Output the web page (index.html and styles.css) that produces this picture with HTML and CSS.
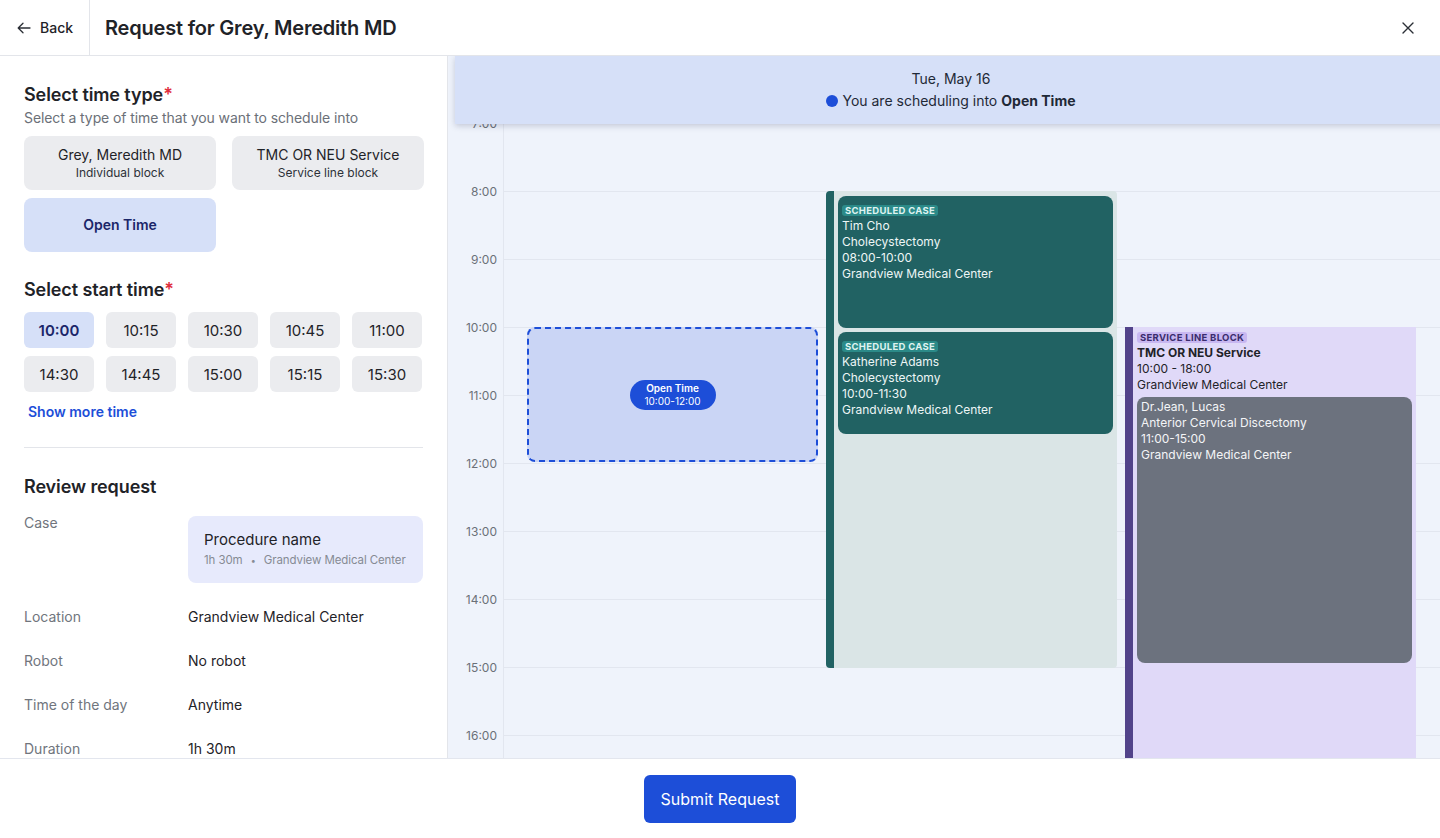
FILE: index.html
```html
<!DOCTYPE html>
<html lang="en">
<head>
<meta charset="utf-8">
<title>Request for Grey, Meredith MD</title>
<link rel="stylesheet" href="styles.css">
</head>
<body>
<div class="app">
  <header class="topbar">
    <button class="back">
      <svg class="back-icon" width="16" height="16" viewBox="0 0 16 16" fill="none" stroke="#2b2f36" stroke-width="1.3" stroke-linecap="round" stroke-linejoin="round"><path d="M14 8H2.5M7 3.2 2.2 8 7 12.8"/></svg>
      <span>Back</span>
    </button>
    <h1 class="title">Request for Grey, Meredith MD</h1>
    <button class="close" aria-label="Close">
      <svg width="12" height="12" viewBox="0 0 12 12" fill="none" stroke="#2b2f36" stroke-width="1.4" stroke-linecap="round"><path d="M1 1l10 10M11 1 1 11"/></svg>
    </button>
  </header>

  <main class="main">
    <aside class="panel">
      <section class="sec">
        <h2 class="sec-title">Select time type<span class="req">*</span></h2>
        <p class="sec-sub">Select a type of time that you want to schedule into</p>
        <div class="type-grid">
          <button class="type-btn"><span class="type-name">Grey, Meredith MD</span><span class="type-sub">Individual block</span></button>
          <button class="type-btn"><span class="type-name">TMC OR NEU Service</span><span class="type-sub">Service line block</span></button>
          <button class="type-btn selected"><span class="type-name">Open Time</span></button>
        </div>
      </section>

      <section class="sec sec-start">
        <h2 class="sec-title">Select start time<span class="req">*</span></h2>
        <div class="time-grid">
          <button class="time-btn selected">10:00</button>
          <button class="time-btn">10:15</button>
          <button class="time-btn">10:30</button>
          <button class="time-btn">10:45</button>
          <button class="time-btn">11:00</button>
          <button class="time-btn">14:30</button>
          <button class="time-btn">14:45</button>
          <button class="time-btn">15:00</button>
          <button class="time-btn">15:15</button>
          <button class="time-btn">15:30</button>
        </div>
        <button class="more-link">Show more time</button>
      </section>

      <hr class="divider">

      <section class="sec sec-review">
        <h2 class="sec-title">Review request</h2>
        <dl class="review">
          <dt>Case</dt>
          <dd>
            <div class="case-summary">
              <div class="case-summary-name">Procedure name</div>
              <div class="case-summary-meta">1h 30m <span class="dot">•</span> Grandview Medical Center</div>
            </div>
          </dd>
          <dt>Location</dt><dd>Grandview Medical Center</dd>
          <dt>Robot</dt><dd>No robot</dd>
          <dt>Time of the day</dt><dd>Anytime</dd>
          <dt>Duration</dt><dd>1h 30m</dd>
        </dl>
      </section>
    </aside>

    <section class="calendar">
      <div class="banner">
        <div class="banner-date">Tue, May 16</div>
        <div class="banner-note"><span class="banner-dot"></span>You are scheduling into <strong>Open Time</strong></div>
      </div>

      <div class="timeline">
        <div class="hour"><span class="hour-label">7:00</span><span class="hour-line"></span></div>
        <div class="hour"><span class="hour-label">8:00</span><span class="hour-line"></span></div>
        <div class="hour"><span class="hour-label">9:00</span><span class="hour-line"></span></div>
        <div class="hour"><span class="hour-label">10:00</span><span class="hour-line"></span></div>
        <div class="hour"><span class="hour-label">11:00</span><span class="hour-line"></span></div>
        <div class="hour"><span class="hour-label">12:00</span><span class="hour-line"></span></div>
        <div class="hour"><span class="hour-label">13:00</span><span class="hour-line"></span></div>
        <div class="hour"><span class="hour-label">14:00</span><span class="hour-line"></span></div>
        <div class="hour"><span class="hour-label">15:00</span><span class="hour-line"></span></div>
        <div class="hour"><span class="hour-label">16:00</span><span class="hour-line"></span></div>

        <div class="events">
          <div class="col">
            <div class="open-slot" style="top:204px;height:135px">
              <div class="open-pill"><span class="open-pill-title">Open Time</span><span>10:00-12:00</span></div>
            </div>
          </div>
          <div class="col">
            <div class="case-block" style="top:68px;height:477px">
              <div class="case-card" style="top:5px;height:132px">
                <span class="badge badge-case">SCHEDULED CASE</span>
                <div>Tim Cho</div>
                <div>Cholecystectomy</div>
                <div>08:00-10:00</div>
                <div>Grandview Medical Center</div>
              </div>
              <div class="case-card" style="top:141px;height:102px">
                <span class="badge badge-case">SCHEDULED CASE</span>
                <div>Katherine Adams</div>
                <div>Cholecystectomy</div>
                <div>10:00-11:30</div>
                <div>Grandview Medical Center</div>
              </div>
            </div>
          </div>
          <div class="col">
            <div class="service-block" style="top:204px;height:544px">
              <span class="badge badge-service">SERVICE LINE BLOCK</span>
              <div class="service-name">TMC OR NEU Service</div>
              <div>10:00 - 18:00</div>
              <div>Grandview Medical Center</div>
              <div class="booked-card" style="top:70px;height:266px">
                <div>Dr.Jean, Lucas</div>
                <div>Anterior Cervical Discectomy</div>
                <div>11:00-15:00</div>
                <div>Grandview Medical Center</div>
              </div>
            </div>
          </div>
        </div>
      </div>
    </section>
  </main>

  <footer class="footer">
    <button class="submit">Submit Request</button>
  </footer>
</div>
</body>
</html>
```

FILE: styles.css
```css
* { box-sizing: border-box; }

body {
  margin: 0;
  font-family: Inter, "Noto Sans", "Liberation Sans", sans-serif;
  color: #1f2328;
  background: #fff;
}

button {
  font-family: inherit;
  cursor: pointer;
}

.app {
  height: 838px;
  display: flex;
  flex-direction: column;
  overflow: hidden;
}

/* Header */
.topbar {
  height: 56px;
  flex: none;
  display: flex;
  align-items: stretch;
  border-bottom: 1px solid #e3e5ea;
}

.back {
  width: 90px;
  display: flex;
  align-items: center;
  gap: 8px;
  padding: 0 0 0 16px;
  border: 0;
  border-right: 1px solid #e3e5ea;
  background: none;
  font-size: 14px;
  font-weight: 500;
  color: #1f2328;
}

.title {
  flex: 1;
  margin: 0;
  padding-left: 15px;
  display: flex;
  align-items: center;
  font-size: 20px;
  font-weight: 600;
  letter-spacing: -0.2px;
  color: #1f2328;
}

.close {
  width: 24px;
  margin-right: 20px;
  border: 0;
  background: none;
  display: flex;
  align-items: center;
  justify-content: center;
  padding: 0;
}

/* Main */
.main {
  flex: 1;
  min-height: 0;
  display: flex;
}

.panel {
  width: 448px;
  flex: none;
  padding: 27px 24px 0;
  border-right: 1px solid #e3e5ea;
  overflow: hidden;
}

.sec-title {
  margin: 0;
  font-size: 18px;
  line-height: 24px;
  font-weight: 600;
  letter-spacing: -0.1px;
  color: #1f2328;
}

.req { color: #e02d3c; }

.sec-sub {
  margin: 1px 0 0;
  font-size: 14px;
  line-height: 20px;
  color: #6b7078;
  letter-spacing: -0.1px;
}

.type-grid {
  margin-top: 8px;
  display: grid;
  grid-template-columns: 192px 192px;
  gap: 8px 16px;
}

.type-btn {
  height: 54px;
  border: 0;
  border-radius: 8px;
  background: #ebecef;
  display: flex;
  flex-direction: column;
  align-items: center;
  justify-content: center;
  padding: 0;
  color: #1f2328;
}

.type-name {
  font-size: 14px;
  line-height: 20px;
}

.type-sub {
  font-size: 12px;
  line-height: 16px;
  color: #2d3138;
}

.type-btn.selected {
  background: #d6e0f8;
}

.type-btn.selected .type-name {
  font-weight: 600;
  color: #1b2669;
}

.sec-start { margin-top: 26px; }

.time-grid {
  margin-top: 10px;
  display: grid;
  grid-template-columns: repeat(5, 70px);
  gap: 8px 12px;
}

.time-btn {
  height: 36px;
  border: 0;
  border-radius: 6px;
  background: #ebecef;
  font-size: 15px;
  color: #1f2328;
  padding: 0;
}

.time-btn.selected {
  background: #d6e0f8;
  color: #1b2669;
  font-weight: 600;
}

.more-link {
  margin-top: 10px;
  padding: 0 4px;
  border: 0;
  background: none;
  font-size: 14px;
  line-height: 20px;
  font-weight: 600;
  color: #1d4ed8;
}

.divider {
  margin: 25px 0 0;
  border: 0;
  border-top: 1px solid #e3e5ea;
}

.sec-review { margin-top: 27px; }

.review {
  margin: 14px 0 0;
  display: grid;
  grid-template-columns: 164px 1fr;
  row-gap: 24px;
  font-size: 14px;
  line-height: 20px;
}

.review dt {
  color: #70757d;
}

.review dd {
  margin: 0;
  color: #1f2328;
}

.case-summary {
  margin-top: 3px;
  padding: 14px 16px;
  border-radius: 8px;
  background: #e7eafc;
}

.case-summary-name {
  font-size: 15px;
  line-height: 20px;
  color: #1f2328;
}

.case-summary-meta {
  margin-top: 2px;
  font-size: 11.5px;
  line-height: 16px;
  color: #868b94;
  white-space: nowrap;
  letter-spacing: -0.1px;
}

.case-summary-meta .dot {
  margin: 0 5px;
  font-size: 9px;
}

/* Calendar */
.calendar {
  flex: 1;
  position: relative;
  overflow: hidden;
  background: #eff3fb;
}

.banner {
  position: absolute;
  top: 0;
  left: 7px;
  width: 100%;
  height: 68px;
  z-index: 5;
  background: #d6e0f8;
  box-shadow: 0 2px 6px rgba(40, 50, 90, 0.22);
  display: flex;
  flex-direction: column;
  align-items: center;
  justify-content: center;
  gap: 2px;
  font-size: 14px;
  line-height: 20px;
  color: #1f2937;
}

.banner-note {
  display: flex;
  align-items: center;
}

.banner-dot {
  width: 12px;
  height: 12px;
  border-radius: 50%;
  background: #1d4ed8;
  margin-right: 4px;
}

.banner-note strong {
  font-weight: 700;
  margin-left: 4px;
}

.timeline {
  position: relative;
  margin-top: 67px;
}

.hour {
  height: 68px;
  display: flex;
}

.hour-label {
  width: 56px;
  flex: none;
  border-right: 1px solid #e2e6ef;
  padding-right: 6px;
  text-align: right;
  font-size: 12px;
  line-height: 16px;
  color: #6b7078;
  transform: translateY(-7px);
  height: 68px;
}

.hour-line {
  flex: 1;
  border-top: 1px solid #e2e6ef;
}

.events {
  position: absolute;
  top: 0;
  bottom: 0;
  left: 79px;
  right: 24px;
  display: grid;
  grid-template-columns: repeat(3, 1fr);
  column-gap: 8px;
}

.col {
  position: relative;
}

.open-slot {
  position: absolute;
  left: 0;
  right: 0;
  border: 2px dashed #1d4ed8;
  border-radius: 8px;
  background: #cad5f5;
  display: flex;
  align-items: center;
  justify-content: center;
}

.open-pill {
  width: 86px;
  height: 30px;
  border-radius: 15px;
  background: #1d4ed8;
  color: #fff;
  display: flex;
  flex-direction: column;
  align-items: center;
  justify-content: center;
  font-size: 10px;
  line-height: 13px;
}

.open-pill-title {
  font-weight: 600;
}

.case-block {
  position: absolute;
  left: 0;
  right: 0;
  background: #dae5e6;
  border-left: 8px solid #216263;
  border-radius: 4px;
}

.case-card {
  position: absolute;
  left: 4px;
  right: 4px;
  padding: 9px 4px 0;
  border-radius: 8px;
  background: #216263;
  color: #eef6f6;
  font-size: 12px;
  line-height: 16px;
}

.badge {
  display: block;
  width: fit-content;
  height: 11px;
  margin-bottom: 2px;
  padding: 0 3px;
  border-radius: 3px;
  font-size: 9.5px;
  line-height: 11px;
  font-weight: 700;
  letter-spacing: 0.3px;
}

.badge-case {
  background: #2b8a88;
  color: #dff3f1;
}

.service-block {
  position: absolute;
  left: 0;
  right: 0;
  padding: 5px 4px 0;
  background: #e0d9f8;
  border-left: 8px solid #52438a;
  color: #1f2328;
  font-size: 12px;
  line-height: 16px;
}

.badge-service {
  background: #c8b7f1;
  color: #3a2c6c;
}

.service-name {
  font-weight: 700;
}

.booked-card {
  position: absolute;
  left: 4px;
  right: 4px;
  padding: 2px 4px 0;
  border-radius: 8px;
  background: #6c727e;
  color: #f4f5f7;
  font-size: 12px;
  line-height: 16px;
}

/* Footer */
.footer {
  height: 80px;
  flex: none;
  border-top: 1px solid #e3e6ee;
  display: flex;
  align-items: center;
  justify-content: center;
}

.submit {
  width: 152px;
  height: 48px;
  border: 0;
  border-radius: 6px;
  background: #1d4ed8;
  color: #fff;
  font-size: 16px;
}
```
